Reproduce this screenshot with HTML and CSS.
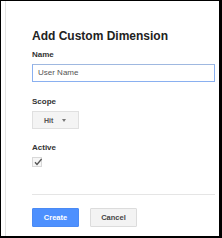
FILE: index.html
```html
<!DOCTYPE html>
<html>
<head>
<meta charset="utf-8">
<link rel="stylesheet" href="styles.css">
</head>
<body>
<div class="frame">
  <div class="panel">
    <h1 class="title">Add Custom Dimension</h1>
    <div class="label label-name">Name</div>
    <div class="input">User Name</div>
    <div class="label label-scope">Scope</div>
    <div class="dropdown"><span class="dd-text">Hit</span><span class="dd-arrow"></span></div>
    <div class="label label-active">Active</div>
    <div class="checkbox">
      <svg width="10" height="10" viewBox="0 0 10 10"><path d="M2 5.2 L4 7.4 L8.6 2" fill="none" stroke="#555" stroke-width="1.3"/></svg>
    </div>
    <div class="divider"></div>
    <div class="actions">
      <div class="btn btn-primary">Create</div>
      <div class="btn btn-default">Cancel</div>
    </div>
  </div>
</div>
</body>
</html>
```

FILE: styles.css
```css
html, body {
  margin: 0;
  padding: 0;
  background: #fff;
}
body {
  font-family: "Liberation Sans", Arial, sans-serif;
}
.frame {
  box-sizing: border-box;
  width: 222px;
  height: 238px;
  border-left: 1px solid #000;
  border-top: 1px solid #000;
  border-right: 3px solid #000;
  border-bottom: 2px solid #000;
  padding-left: 4px;
  overflow: hidden;
}
.panel {
  box-sizing: border-box;
  height: 100%;
  border-left: 1px solid #e3e3e3;
  padding: 28px 4px 0 26px;
}
.title {
  margin: 0;
  font-size: 12px;
  line-height: 14px;
  font-weight: bold;
  color: #222;
}
.label {
  font-size: 8px;
  line-height: 10px;
  font-weight: bold;
  color: #333;
}
.label-name { margin-top: 7px; }
.label-scope { margin-top: 15px; }
.label-active { margin-top: 14px; }
.input {
  box-sizing: border-box;
  margin-top: 4px;
  height: 18px;
  border: 1px solid #8ab0f0;
  border-top-color: #9fb8e0;
  padding-left: 5px;
  font-size: 8px;
  line-height: 16px;
  color: #555;
}
.dropdown {
  box-sizing: border-box;
  margin-top: 4px;
  width: 47px;
  height: 18px;
  border: 1px solid #e0e0e0;
  background: #f4f4f4;
  display: flex;
  align-items: center;
  padding-left: 11px;
}
.dd-text {
  font-size: 7px;
  font-weight: bold;
  color: #555;
}
.dd-arrow {
  margin-left: 9px;
  width: 0;
  height: 0;
  border-left: 2.5px solid transparent;
  border-right: 2.5px solid transparent;
  border-top: 3px solid #777;
}
.checkbox {
  box-sizing: border-box;
  margin-top: 4px;
  width: 10px;
  height: 10px;
  border: 1px solid #d8d8d8;
  background: #f6f6f6;
  position: relative;
}
.checkbox svg {
  position: absolute;
  left: 0;
  top: -1px;
}
.divider {
  margin-top: 27px;
  height: 1px;
  background: #e5e5e5;
}
.actions {
  margin-top: 13px;
  display: flex;
  gap: 11px;
}
.btn {
  box-sizing: border-box;
  width: 47px;
  height: 19px;
  font-size: 7.5px;
  font-weight: bold;
  display: flex;
  align-items: center;
  justify-content: center;
  border-radius: 1px;
}
.btn-primary {
  background: #4d90fe;
  border: 1px solid #4a8af4;
  color: #fff;
}
.btn-default {
  background: #f3f3f3;
  border: 1px solid #dcdcdc;
  color: #444;
}
```
